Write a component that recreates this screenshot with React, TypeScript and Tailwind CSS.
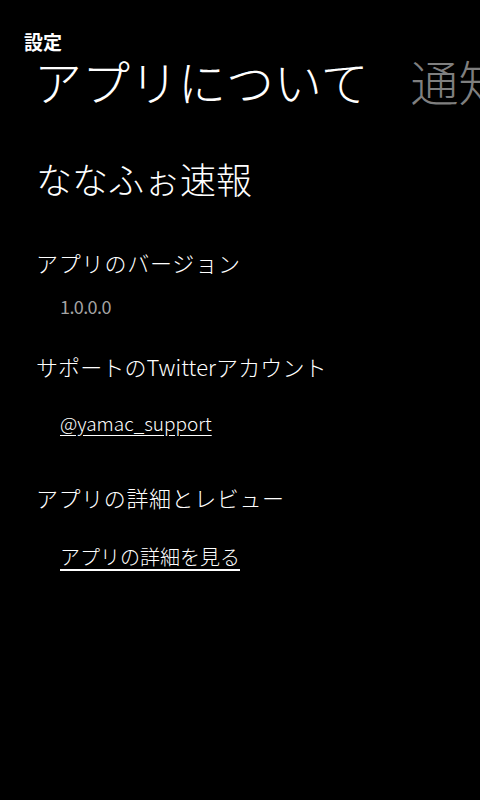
export default function App() {
  const jp = { fontFamily: '"Noto Sans CJK JP", "Noto Sans", sans-serif' };
  return (
    <div className="w-[480px] h-[800px] bg-black text-white overflow-hidden" style={jp}>
      <div className="pt-[32px] pl-[24px] text-[19px] font-bold leading-[20px]">設定</div>
      <div className="flex whitespace-nowrap mt-[4px] pl-[34px] text-[48px] font-light leading-[48px]">
        <span className="text-white">アプリについて</span>
        <span className="ml-[42px] text-[#7f7f7f]">通知</span>
      </div>
      <div className="pl-[36px] mt-[52px] text-[36px] font-light leading-[44px]">ななふぉ速報</div>
      <div className="pl-[36px] mt-[48px] text-[22px] font-light leading-[28px] tracking-[0.8px]">アプリのバージョン</div>
      <div className="pl-[60px] mt-[18px] text-[18px] font-normal leading-[24px] tracking-[-0.6px] text-[#a3a3a3]">1.0.0.0</div>
      <div className="pl-[36px] mt-[34px] text-[22px] font-light leading-[28px] tracking-[0.1px]">サポートのTwitterアカウント</div>
      <div className="pl-[60px] mt-[29px] text-[19px] font-light leading-[28px] underline underline-offset-4">@yamac_support</div>
      <div className="pl-[36px] mt-[46px] text-[22px] font-light leading-[28px] tracking-[0.6px]">アプリの詳細とレビュー</div>
      <div className="pl-[60px] mt-[32px] text-[20px] font-light leading-[28px] underline underline-offset-4">アプリの詳細を見る</div>
    </div>
  );
}
